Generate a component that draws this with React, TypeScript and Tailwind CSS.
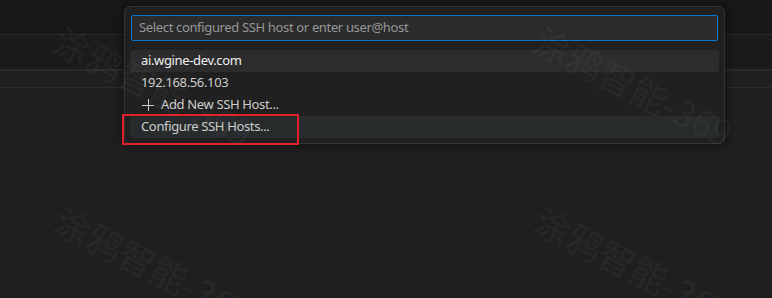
const rows = [
  { label: "ai.wgine-dev.com", active: true },
  { label: "192.168.56.103" },
  { label: "Add New SSH Host...", icon: true },
  { label: "Configure SSH Hosts...", hover: true },
]

const marks = [
  { left: "left-[66px]", top: "top-[20px]" },
  { left: "left-[546px]", top: "top-[20px]" },
  { left: "left-[66px]", top: "top-[200px]" },
  { left: "left-[546px]", top: "top-[200px]" },
]

function AddIcon() {
  return (
    <svg width="14" height="14" viewBox="0 0 14 14" className="shrink-0">
      <path d="M1 7.5h12M7.5 1v12" stroke="#cccccc" strokeWidth="1" fill="none" />
    </svg>
  )
}

export default function App() {
  return (
    <div
      className="relative w-[772px] h-[298px] overflow-hidden bg-[#1f1f1f] text-[13px] tracking-[-0.35px]"
      style={{ fontFamily: '"Noto Sans", "Noto Sans CJK SC", sans-serif' }}
    >
      {/* editor chrome behind the quick pick */}
      <div className="h-[34px] bg-[#181818]" />
      <div className="h-px bg-[#2b2b2b]" />
      <div className="h-[34px] bg-[#1b1b1b]" />
      <div className="h-[2px] bg-[#2b2b2b]" />
      <div className="h-[16px] bg-[#1f1f1f]" />
      <div className="h-px bg-[#2b2b2b]" />

      {/* quick pick */}
      <div className="absolute left-[124px] top-[6px] w-[601px] rounded-[6px] border border-[#333333] bg-[#202020] px-[6px] pt-[8px] pb-[5px] shadow-[0_0_8px_2px_rgba(0,0,0,0.4)]">
        <div className="flex h-[26px] items-center rounded-[2px] border border-[#0078d4] bg-[#2b2b2b] pl-[7px] text-[#989898]">
          Select configured SSH host or enter user@host
        </div>
        <div className="mt-[9px] -mx-px flex flex-col">
          {rows.map((r) => (
            <div
              key={r.label}
              className={
                "flex h-[22px] items-center gap-[6px] rounded-[3px] pl-[11px] " +
                (r.active
                  ? "bg-[#2c2c2c] text-[#f0f0f0]"
                  : r.hover
                    ? "bg-[#272b2c] text-[#cccccc]"
                    : "text-[#cccccc]")
              }
            >
              {r.icon && <AddIcon />}
              <span>{r.label}</span>
            </div>
          ))}
        </div>
      </div>

      {/* annotation */}
      <div className="absolute left-[122px] top-[114px] h-[31px] w-[177px] border-2 border-[#e0202a]" />

      {/* watermark */}
      {marks.map((m, i) => (
        <div
          key={i}
          className={`pointer-events-none absolute ${m.left} ${m.top} origin-top-left rotate-[27deg] whitespace-nowrap text-[36px] leading-none tracking-normal text-white/[0.035]`}
          style={{ fontFamily: '"Noto Sans CJK SC", sans-serif' }}
        >
          涂鸦智能-369
        </div>
      ))}
    </div>
  )
}
